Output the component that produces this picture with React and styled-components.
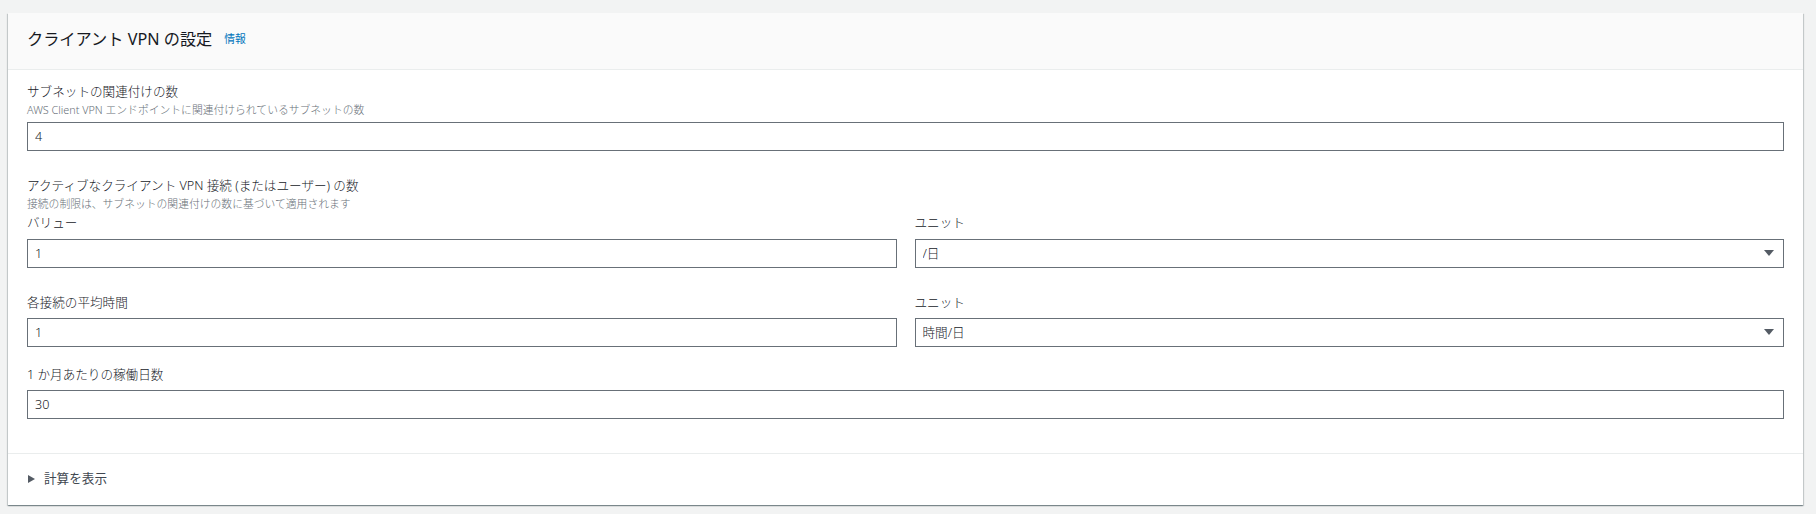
import styled, { createGlobalStyle } from "styled-components";

const GlobalStyle = createGlobalStyle`
  html, body {
    margin: 0;
    padding: 0;
    background: #f2f3f3;
  }
  body {
    font-family: "Noto Sans", "Noto Sans CJK JP", sans-serif;
    color: #16191f;
    -webkit-font-smoothing: antialiased;
  }
`;

const Page = styled.div`
  padding: 13px 13px 8px 8px;
`;

const Card = styled.section`
  background: #fff;
  box-shadow: 0 1px 1px 0 rgba(0, 28, 36, 0.3),
    1px 1px 1px 0 rgba(0, 28, 36, 0.15),
    -1px 1px 1px 0 rgba(0, 28, 36, 0.15);
`;

const Header = styled.header`
  display: flex;
  align-items: center;
  height: 57px;
  padding: 0 19px 4px;
  box-sizing: border-box;
  background: #fafafa;
  border-bottom: 1px solid #eaeded;
`;

const Title = styled.h2`
  margin: 0;
  font-size: 16.2px;
  line-height: 22px;
  font-weight: 400;
  color: #16191f;
`;

const InfoLink = styled.a`
  margin-left: 12px;
  font-size: 10.8px;
  line-height: 22px;
  color: #0073bb;
  text-decoration: none;
`;

const Body = styled.div`
  padding: 12px 19px 34px;
  border-bottom: 1px solid #eaeded;
`;

const Field = styled.div`
  margin-top: ${(p) => p.$top || 0}px;
`;

const Label = styled.div`
  font-size: 12.6px;
  line-height: 20px;
  font-weight: 300;
  color: #16191f;
  margin-bottom: ${(p) => (p.$gap === undefined ? 6 : p.$gap)}px;
`;

const Description = styled.div`
  font-size: 10.8px;
  line-height: 16px;
  font-weight: 300;
  color: #687078;
  margin-bottom: ${(p) => (p.$gap === undefined ? 4 : p.$gap)}px;
`;

const Row = styled.div`
  display: grid;
  grid-template-columns: 1fr 1fr;
  column-gap: 18px;
  margin-top: ${(p) => p.$top || 0}px;
`;

const TextInput = styled.input`
  display: block;
  width: 100%;
  height: 29px;
  box-sizing: border-box;
  padding: 0 7px;
  border: 1px solid #687078;
  border-radius: 0;
  background: #fff;
  font-family: inherit;
  font-size: 12.6px;
  font-weight: 300;
  color: #16191f;
  outline: none;
`;

const SelectWrap = styled.div`
  position: relative;
`;

const Select = styled.select`
  display: block;
  width: 100%;
  height: 29px;
  box-sizing: border-box;
  padding: 0 30px 0 7px;
  border: 1px solid #687078;
  border-radius: 0;
  background: #fff;
  font-family: inherit;
  font-size: 12.6px;
  font-weight: 300;
  color: #16191f;
  appearance: none;
  -webkit-appearance: none;
  outline: none;
`;

const Caret = styled.span`
  position: absolute;
  right: 10px;
  top: 11px;
  width: 0;
  height: 0;
  border-left: 5px solid transparent;
  border-right: 5px solid transparent;
  border-top: 6px solid #545b64;
  pointer-events: none;
`;

const Footer = styled.div`
  display: flex;
  align-items: center;
  height: 51px;
  padding: 0 20px 2px;
  box-sizing: border-box;
`;

const Expander = styled.button`
  display: flex;
  align-items: center;
  gap: 9px;
  padding: 0;
  border: 0;
  background: none;
  font-family: inherit;
  font-size: 12.6px;
  line-height: 20px;
  color: #414750;
  cursor: pointer;
`;

const Arrow = styled.span`
  width: 0;
  height: 0;
  border-top: 4.5px solid transparent;
  border-bottom: 4.5px solid transparent;
  border-left: 7px solid #545b64;
`;

const Dropdown = ({ value, options }) => (
  <SelectWrap>
    <Select defaultValue={value}>
      {options.map((o) => (
        <option key={o}>{o}</option>
      ))}
    </Select>
    <Caret />
  </SelectWrap>
);

export default function App() {
  return (
    <>
      <GlobalStyle />
      <Page>
        <Card>
          <Header>
            <Title>クライアント VPN の設定</Title>
            <InfoLink href="#">情報</InfoLink>
          </Header>
          <Body>
            <Field>
              <Label $gap={0}>サブネットの関連付けの数</Label>
              <Description>
                AWS Client VPN エンドポイントに関連付けられているサブネットの数
              </Description>
              <TextInput defaultValue="4" />
            </Field>

            <Field $top={25}>
              <Label $gap={0}>
                アクティブなクライアント VPN 接続 (またはユーザー) の数
              </Label>
              <Description $gap={1}>
                接続の制限は、サブネットの関連付けの数に基づいて適用されます
              </Description>
            </Field>
            <Row>
              <Field>
                <Label>バリュー</Label>
                <TextInput defaultValue="1" />
              </Field>
              <Field>
                <Label>ユニット</Label>
                <Dropdown value="/日" options={["/日", "/月"]} />
              </Field>
            </Row>

            <Row $top={25}>
              <Field>
                <Label $gap={5}>各接続の平均時間</Label>
                <TextInput defaultValue="1" />
              </Field>
              <Field>
                <Label $gap={5}>ユニット</Label>
                <Dropdown value="時間/日" options={["時間/日", "時間/月"]} />
              </Field>
            </Row>

            <Field $top={18}>
              <Label $gap={5}>1 か月あたりの稼働日数</Label>
              <TextInput defaultValue="30" />
            </Field>
          </Body>
          <Footer>
            <Expander type="button">
              <Arrow />
              計算を表示
            </Expander>
          </Footer>
        </Card>
      </Page>
    </>
  );
}
